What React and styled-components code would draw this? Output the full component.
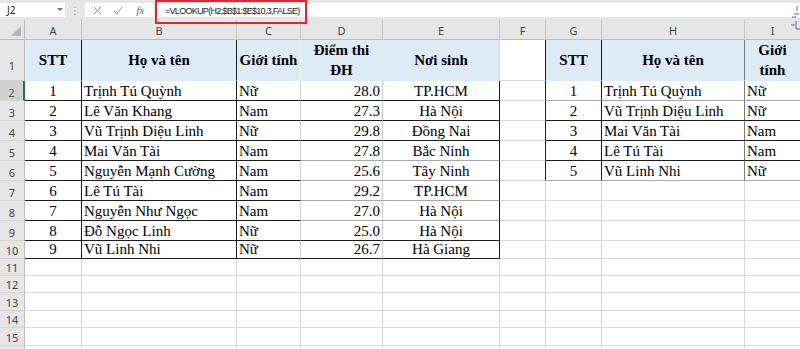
import React from "react";
import styled, { createGlobalStyle } from "styled-components";

const BLUE = "#ddebf7";
const GRID = "#dadada";
const DARK = "#1c1c1c";
const SOFT = "#a8a8a8";
const MID = "#7a7a7a";
const HEAD = "#e6e6e6";

const colWidths = [57, 155, 64, 82, 117, 46, 56, 143, 56];
const letters = ["A", "B", "C", "D", "E", "F", "G", "H", "I"];
const rowHeights = [41, 20, 20, 20, 20, 20, 20, 20, 20, 18, 17, 17, 18, 17, 18, 17];

const headerTexts = ["STT", "Họ và tên", "Giới tính", "Điểm thi\nĐH", "Nơi sinh", "", "STT", "Họ và tên", "Giới\ntính"];

const leftRows = [
  ["1", "Trịnh Tú Quỳnh", "Nữ", "28.0", "TP.HCM"],
  ["2", "Lê Văn Khang", "Nam", "27.3", "Hà Nội"],
  ["3", "Vũ Trịnh Diệu Linh", "Nữ", "29.8", "Đồng Nai"],
  ["4", "Mai Văn Tài", "Nam", "27.8", "Bắc Ninh"],
  ["5", "Nguyễn Mạnh Cường", "Nam", "25.6", "Tây Ninh"],
  ["6", "Lê Tú Tài", "Nam", "29.2", "TP.HCM"],
  ["7", "Nguyễn Như Ngọc", "Nam", "27.0", "Hà Nội"],
  ["8", "Đỗ Ngọc Linh", "Nữ", "25.0", "Hà Nội"],
  ["9", "Vũ Linh Nhi", "Nữ", "26.7", "Hà Giang"],
];

const rightRows = [
  ["1", "Trịnh Tú Quỳnh", "Nữ"],
  ["2", "Vũ Trịnh Diệu Linh", "Nữ"],
  ["3", "Mai Văn Tài", "Nam"],
  ["4", "Lê Tú Tài", "Nam"],
  ["5", "Vũ Linh Nhi", "Nữ"],
];

const leftAlign = ["center", "left", "left", "right", "center"];
const rightAlign = ["center", "left", "left"];

// border + content rules for a sheet cell (r is the 1-based row, c the column index)
function cellAt(r, c) {
  const cell = { text: "", align: "left", bold: false, bg: null, r: GRID, b: GRID, header: false };
  if (r === 1) {
    if (c !== 5) {
      cell.bg = BLUE;
      cell.bold = true;
      cell.align = "center";
      cell.header = true;
      cell.b = BLUE;
      cell.text = headerTexts[c];
    }
    cell.r = [DARK, DARK, "#f3f8fd", BLUE, GRID, DARK, DARK, MID, GRID][c];
    return cell;
  }
  if (c <= 4 && r <= 10) {
    cell.text = leftRows[r - 2][c];
    cell.align = leftAlign[c];
    cell.r = [DARK, DARK, "#cfcfcf", "#cfcfcf", DARK][c];
    cell.b = c <= 2 || [2, 3, 4, 9, 10].includes(r) ? DARK : SOFT;
  }
  if (c === 5 && r <= 6) cell.r = DARK;
  if (c >= 6 && r <= 6) {
    cell.text = rightRows[r - 2][c - 6];
    cell.align = rightAlign[c - 6];
    cell.r = [DARK, MID, DARK][c - 6];
    cell.b = [3, 4, 5].includes(r) ? DARK : SOFT;
  }
  return cell;
}

const GlobalStyle = createGlobalStyle`
  html, body {
    margin: 0;
    padding: 0;
    background: #fff;
    overflow: hidden;
  }
  body {
    width: 800px;
    height: 349px;
    font-family: "Liberation Serif", "Times New Roman", serif;
  }
`;

const Window = styled.div`
  position: relative;
  width: 800px;
  height: 349px;
  overflow: hidden;
`;

const FormulaBar = styled.div`
  display: flex;
  height: 20px;
  box-sizing: border-box;
  padding: 3px 0;
  background: ${HEAD};
`;

const NameBox = styled.div`
  width: 65px;
  display: flex;
  align-items: center;
  justify-content: space-between;
  box-sizing: border-box;
  padding: 0 2px 0 7px;
  background: #fff;
  font: 10px "Noto Sans", sans-serif;
  color: #222;
`;

const Grip = styled.div`
  width: 20px;
  display: flex;
  align-items: center;
  justify-content: center;
  color: #9c9c9c;
  font: 10px "DejaVu Sans", sans-serif;
`;

const IconArea = styled.div`
  width: 69px;
  display: grid;
  grid-template-columns: 24px 18px 27px;
  align-items: center;
  justify-items: center;
  background: #fff;
`;

const Fx = styled.span`
  font: italic 11px "Liberation Serif", serif;
  color: #666;
`;

const FormulaInput = styled.div`
  flex: 1;
  margin-left: 1px;
  background: #fff;
`;

const RedBox = styled.div`
  position: relative;
  z-index: 3;
  width: 152px;
  height: 24px;
  margin-top: -3px;
  box-sizing: border-box;
  border: 2px solid #e3262c;
  padding: 3px 0 0 8px;
  font: 9px/12px "Liberation Sans", Arial, sans-serif;
  letter-spacing: -0.7px;
  color: #222;
  white-space: nowrap;
`;

const Sheet = styled.div`
  display: grid;
  grid-template-columns: 25px ${colWidths.map((w) => w + "px").join(" ")};
  grid-template-rows: 20px ${rowHeights.map((h) => h + "px").join(" ")};
`;

const Corner = styled.div`
  box-sizing: border-box;
  display: flex;
  align-items: flex-end;
  justify-content: flex-end;
  padding: 0 3px 3px 0;
  background: ${HEAD};
  border-right: 1px solid #bcbcbc;
  border-bottom: 1px solid #bcbcbc;
`;

const ColHead = styled.div`
  box-sizing: border-box;
  display: flex;
  align-items: flex-end;
  justify-content: center;
  padding-bottom: 1px;
  background: ${HEAD};
  border-right: 1px solid #c6c6c6;
  border-bottom: 1px solid #bcbcbc;
  font: 11px/14px "Noto Sans", sans-serif;
  color: #444;
`;

const RowHead = styled.div`
  box-sizing: border-box;
  display: flex;
  align-items: flex-end;
  justify-content: center;
  padding-bottom: ${(p) => p.$pb}px;
  background: ${(p) => (p.$sel ? "#d2d2d2" : HEAD)};
  color: ${(p) => (p.$sel ? "#217346" : "#444")};
  border-right: ${(p) => (p.$sel ? "2px solid #217346" : "1px solid #bcbcbc")};
  border-bottom: 1px solid #d4d4d4;
  font: 11px/14px "Noto Sans", sans-serif;
`;

const justify = { left: "flex-start", center: "center", right: "flex-end" };

const Cell = styled.div`
  box-sizing: border-box;
  display: flex;
  align-items: ${(p) => (p.$header ? "center" : "flex-end")};
  justify-content: ${(p) => justify[p.$align]};
  text-align: ${(p) => p.$align};
  padding: 0 ${(p) => (p.$header ? 1 : 2)}px;
  background: ${(p) => p.$bg || "#fff"};
  border-right: 1px solid ${(p) => p.$r};
  border-bottom: 1px solid ${(p) => p.$b};
  font-size: 15px;
  font-weight: ${(p) => (p.$bold ? 700 : 400)};
  line-height: ${(p) => (p.$header ? 20 : 18)}px;
  white-space: pre-line;
  color: #000;
  overflow: hidden;
`;

const CursorMark = styled.svg`
  position: absolute;
  left: 789px;
  top: 5px;
`;

const App = () => {
  return (
    <Window>
      <GlobalStyle />
      <FormulaBar>
        <NameBox>
          J2
          <svg width="6" height="4" viewBox="0 0 6 4">
            <path d="M0 0 L6 0 L3 3 Z" fill="#777" />
          </svg>
        </NameBox>
        <Grip>⋮</Grip>
        <IconArea>
          <svg width="9" height="9" viewBox="0 0 9 9">
            <path d="M1 1 L8 8 M8 1 L1 8" stroke="#9a9a9a" strokeWidth="1" />
          </svg>
          <svg width="10" height="9" viewBox="0 0 10 9">
            <path d="M1 5 L4 8 L9 1" stroke="#9a9a9a" strokeWidth="1" fill="none" />
          </svg>
          <Fx>fx</Fx>
        </IconArea>
        <FormulaInput>
          <RedBox>=VLOOKUP(H2,$B$1:$E$10,3,FALSE)</RedBox>
        </FormulaInput>
      </FormulaBar>
      <Sheet>
        <Corner>
          <svg width="10" height="10" viewBox="0 0 10 10">
            <path d="M10 0 L10 10 L0 10 Z" fill="#b4b4b4" />
          </svg>
        </Corner>
        {letters.map((l) => (
          <ColHead key={l}>{l}</ColHead>
        ))}
        {rowHeights.map((_, i) => {
          const r = i + 1;
          return (
            <React.Fragment key={r}>
              <RowHead $sel={r === 2} $pb={r === 1 ? 7 : 0}>
                {r < 16 ? r : ""}
              </RowHead>
              {letters.map((l, c) => {
                const cell = cellAt(r, c);
                return (
                  <Cell
                    key={l}
                    $align={cell.align}
                    $bold={cell.bold}
                    $bg={cell.bg}
                    $r={cell.r}
                    $b={cell.b}
                    $header={cell.header}
                  >
                    {cell.text}
                  </Cell>
                );
              })}
            </React.Fragment>
          );
        })}
      </Sheet>
      <CursorMark width="11" height="28" viewBox="0 0 11 28">
        <path d="M8 1 v5 M5 9 h5 M3 12 h4 M7 16 v8 h4 M2 20 h4" stroke="#4a72c0" strokeWidth="1" fill="none" />
      </CursorMark>
    </Window>
  );
};

export default App;
